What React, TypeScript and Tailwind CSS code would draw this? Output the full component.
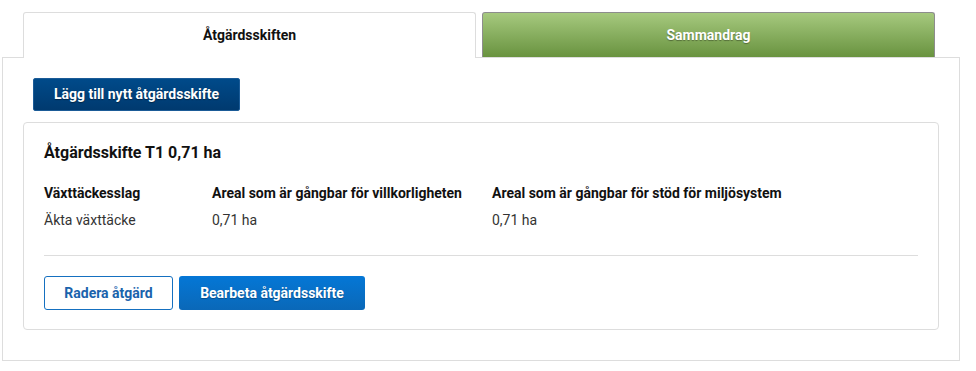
import React from "react";

export default function App() {
  return (
    <div className="w-[976px] h-[371px] bg-white pl-[2px] pt-[12px]" style={{ fontFamily: "Roboto, 'Liberation Sans', sans-serif" }}>
      <div className="w-[958px]">
        <div className="flex pl-[21px] gap-[6px] relative z-10 -mb-px">
          <div className="w-[453px] h-[46px] bg-white border border-[#dddddd] border-b-0 rounded-t-[3px] flex items-center justify-center text-[14px] font-bold text-[#111]">
            Åtgärdsskiften
          </div>
          <div className="w-[453px] h-[45px] border border-[#8d8d8d] border-b-0 rounded-t-[3px] bg-gradient-to-b from-[#a6c97e] to-[#69933f] flex items-center justify-center text-[14px] font-bold text-white [text-shadow:0_1px_1px_rgba(0,0,0,0.35)]">
            Sammandrag
          </div>
        </div>
        <div className="border border-[#dddddd] pt-[20px] px-[20px] pb-[30px]">
          <button className="ml-[10px] w-[207px] h-[33px] rounded-[2px] border border-[#1b5b97] bg-gradient-to-b from-[#004a8a] to-[#003a6f] text-white text-[14px] font-bold [text-shadow:0_1px_1px_rgba(0,0,0,0.4)]">
            Lägg till nytt åtgärdsskifte
          </button>
          <div className="mt-[11px] border border-[#dddddd] rounded-[4px] px-[20px] pt-[20px] pb-[19px]">
            <div className="text-[16px] leading-[20px] font-bold text-[#111]">Åtgärdsskifte T1 0,71 ha</div>
            <div className="mt-[21px] grid grid-cols-[168px_280px_1fr] text-[14px] leading-[18px] gap-y-[9px]">
              <div className="font-bold text-[#111]">Växttäckesslag</div>
              <div className="font-bold text-[#111]">Areal som är gångbar för villkorligheten</div>
              <div className="font-bold text-[#111]">Areal som är gångbar för stöd för miljösystem</div>
              <div className="text-[#333]">Äkta växttäcke</div>
              <div className="text-[#333]">0,71 ha</div>
              <div className="text-[#333]">0,71 ha</div>
            </div>
            <div className="mt-[26px] h-px bg-[#dddddd]" />
            <div className="mt-[20px] flex gap-[6px]">
              <button className="w-[129px] h-[34px] rounded-[3px] border border-[#1570c0] bg-white text-[#1a63ac] text-[14px] font-bold">
                Radera åtgärd
              </button>
              <button className="w-[186px] h-[34px] rounded-[3px] bg-gradient-to-b from-[#0477d6] to-[#0a68b8] text-white text-[14px] font-bold [text-shadow:0_1px_1px_rgba(0,0,0,0.3)]">
                Bearbeta åtgärdsskifte
              </button>
            </div>
          </div>
        </div>
      </div>
    </div>
  );
}
